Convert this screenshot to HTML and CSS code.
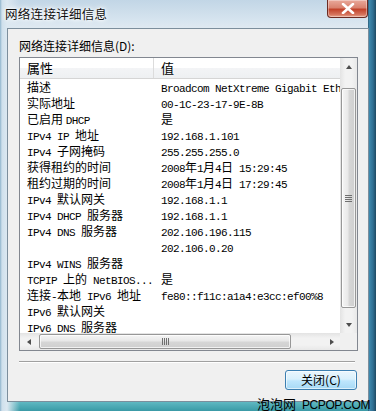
FILE: index.html
```html
<!DOCTYPE html>
<html lang="zh-CN">
<head>
<meta charset="utf-8">
<title>网络连接详细信息</title>
<link rel="stylesheet" href="styles.css">
</head>
<body>
<div class="frame">
  <div class="titlebar">
    <div class="title">网络连接详细信息</div>
    <div class="close">
      <svg width="14" height="11" viewBox="0 0 14 11"><path d="M2 1 L12 10 M12 1 L2 10" stroke="#ffffff" stroke-width="2.6" stroke-linecap="round"/></svg>
    </div>
  </div>
  <div class="panel">
    <div class="label">网络连接详细信息(D):</div>
    <div class="listbox">
      <div class="main">
        <div class="head">
          <div class="h1">属性</div>
          <div class="h2">值</div>
        </div>
        <div class="row"><div class="c1">描述</div><div class="c2"><span class="m">Broadcom NetXtreme Gigabit Ethernet</span></div></div>
        <div class="row"><div class="c1">实际地址</div><div class="c2"><span class="m">00-1C-23-17-9E-8B</span></div></div>
        <div class="row"><div class="c1">已启用 <span class="m">DHCP</span></div><div class="c2">是</div></div>
        <div class="row"><div class="c1"><span class="m">IPv4 IP </span>地址</div><div class="c2"><span class="m">192.168.1.101</span></div></div>
        <div class="row"><div class="c1"><span class="m">IPv4 </span>子网掩码</div><div class="c2"><span class="m">255.255.255.0</span></div></div>
        <div class="row"><div class="c1">获得租约的时间</div><div class="c2"><span class="m">2008</span>年<span class="m">1</span>月<span class="m">4</span>日<span class="m"> 15:29:45</span></div></div>
        <div class="row"><div class="c1">租约过期的时间</div><div class="c2"><span class="m">2008</span>年<span class="m">1</span>月<span class="m">4</span>日<span class="m"> 17:29:45</span></div></div>
        <div class="row"><div class="c1"><span class="m">IPv4 </span>默认网关</div><div class="c2"><span class="m">192.168.1.1</span></div></div>
        <div class="row"><div class="c1"><span class="m">IPv4 DHCP </span>服务器</div><div class="c2"><span class="m">192.168.1.1</span></div></div>
        <div class="row"><div class="c1"><span class="m">IPv4 DNS </span>服务器</div><div class="c2"><span class="m">202.106.196.115</span></div></div>
        <div class="row"><div class="c1"></div><div class="c2"><span class="m">202.106.0.20</span></div></div>
        <div class="row"><div class="c1"><span class="m">IPv4 WINS </span>服务器</div><div class="c2"></div></div>
        <div class="row"><div class="c1"><span class="m">TCPIP </span>上的<span class="m"> NetBIOS...</span></div><div class="c2">是</div></div>
        <div class="row"><div class="c1">连接<span class="m">-</span>本地<span class="m"> IPv6 </span>地址</div><div class="c2"><span class="m">fe80::f11c:a1a4:e3cc:ef00%8</span></div></div>
        <div class="row"><div class="c1"><span class="m">IPv6 </span>默认网关</div><div class="c2"></div></div>
        <div class="row"><div class="c1"><span class="m">IPv6 DNS </span>服务器</div><div class="c2"></div></div>
      </div>
      <div class="vscroll">
        <div class="arrow"><span class="tri up"></span></div>
        <div class="vthumb">
          <svg width="7" height="7" viewBox="0 0 7 7"><path d="M0 0.5H7M0 2.5H7M0 4.5H7M0 6.5H7" stroke="#6f6f6f" stroke-width="1"/></svg>
        </div>
        <div class="vfill"></div>
        <div class="arrow"><span class="tri down"></span></div>
      </div>
      <div class="hscroll">
        <div class="harrow"><span class="tri left"></span></div>
        <div class="hthumb">
          <svg width="7" height="7" viewBox="0 0 7 7"><path d="M0.5 0V7M2.5 0V7M4.5 0V7M6.5 0V7" stroke="#6f6f6f" stroke-width="1"/></svg>
        </div>
        <div class="hfill"></div>
        <div class="harrow"><span class="tri right"></span></div>
      </div>
      <div class="corner"></div>
    </div>
    <div class="sep"></div>
    <div class="buttons">
      <div class="btn">关闭(C)</div>
    </div>
  </div>
  <div class="watermark">泡泡网 <span class="wm">PCPOP.COM</span></div>
</div>
</body>
</html>
```
FILE: styles.css
```css
html, body {
  margin: 0;
  padding: 0;
}
body {
  width: 376px;
  height: 411px;
  overflow: hidden;
  font-family: "Noto Sans CJK SC", "Liberation Sans", sans-serif;
  font-size: 12px;
  color: #000;
}
.frame {
  position: relative;
  width: 376px;
  height: 411px;
  box-sizing: border-box;
  display: flex;
  flex-direction: column;
  background:
    linear-gradient(90deg, rgba(0,0,0,0) 368px, #24485e 368px, #3f8bb0 369px, #2f6f92 373px, #1e4a63 376px),
    linear-gradient(90deg, #8fb4cc 0px, #cfe0ec 2px, #dce8f1 7px, rgba(220,232,241,0) 20px),
    linear-gradient(180deg, #c2d6e6 0px, #d6e4ef 20px, #dfe9f1 28px, #d8e6ee 300px, #bfdde4 380px, #5fb8c2 402px, #3a9aa6 411px);
}
.titlebar {
  height: 28px;
  display: flex;
  justify-content: space-between;
  align-items: flex-start;
}
.title {
  padding: 5px 0 0 5px;
  line-height: 18px;
  font-size: 12.5px;
  letter-spacing: 0.3px;
  color: #101010;
  text-shadow: 0 0 4px #ffffff, 0 0 6px #ffffff, 0 0 2px #ffffff;
}
.close {
  width: 41px;
  height: 18px;
  margin-right: 8px;
  box-sizing: border-box;
  border: 1px solid #6b2b22;
  border-top: none;
  border-radius: 0 0 4px 4px;
  background: linear-gradient(180deg, #e9a99b 0%, #d9826f 45%, #c2432b 55%, #d5735c 85%, #e9a58f 100%);
  box-shadow: inset 0 0 0 1px rgba(255,255,255,0.35);
  display: flex;
  align-items: center;
  justify-content: center;
}
.panel {
  margin: 0 7px;
  width: 362px;
  height: 374px;
  box-sizing: border-box;
  border: 1px solid #7c8e9c;
  background: #f0f0f0;
  display: flex;
  flex-direction: column;
}
.label {
  margin: 9px 0 0 11px;
  line-height: 16px;
  height: 16px;
}
.listbox {
  margin: 3px 0 0 11px;
  width: 339px;
  height: 294px;
  box-sizing: border-box;
  border: 1px solid #828790;
  background: #ffffff;
  display: grid;
  grid-template-columns: 320px 17px;
  grid-template-rows: 275px 17px;
}
.main {
  overflow: hidden;
}
.head {
  height: 20px;
  border-bottom: 1px solid #d5d5d5;
  display: flex;
  background: linear-gradient(180deg, #ffffff 0%, #ffffff 50%, #f3f4f6 51%, #eef0f2 100%);
  line-height: 20px;
  font-size: 13px;
}
.h1 {
  width: 126px;
  padding-left: 7px;
  border-right: 1px solid #dcdcdc;
}
.h2 {
  padding-left: 7px;
}
.row {
  display: flex;
  height: 16px;
  line-height: 16px;
  white-space: nowrap;
}
.c1 {
  width: 127px;
  padding-left: 7px;
  flex: none;
  overflow: hidden;
}
.c2 {
  padding-left: 7px;
  flex: none;
}
.m {
  font-family: "Liberation Mono", "DejaVu Sans Mono", monospace;
  font-size: 11px;
  letter-spacing: -0.6px;
  white-space: pre;
}
.vscroll {
  display: flex;
  flex-direction: column;
  background: linear-gradient(90deg, #e3e3e3 0%, #f2f2f2 30%, #f2f2f2 70%, #e8e8e8 100%);
}
.arrow {
  height: 17px;
  display: flex;
  align-items: center;
  justify-content: center;
  flex: none;
}
.vthumb {
  margin: 13px 1px 0 1px;
  height: 220px;
  flex: none;
  box-sizing: border-box;
  border: 1px solid #979797;
  border-radius: 2px;
  background: linear-gradient(90deg, #f5f5f5 0%, #e8e8e8 45%, #d6d6d6 55%, #cfcfcf 100%);
  box-shadow: inset 0 0 0 1px rgba(255,255,255,0.7);
  display: flex;
  align-items: center;
  justify-content: center;
}
.vfill {
  flex: 1;
}
.hscroll {
  display: flex;
  background: linear-gradient(180deg, #e3e3e3 0%, #f2f2f2 30%, #f2f2f2 70%, #e8e8e8 100%);
}
.harrow {
  width: 17px;
  display: flex;
  align-items: center;
  justify-content: center;
  flex: none;
}
.hthumb {
  margin: 1px 0 1px 2px;
  width: 252px;
  flex: none;
  box-sizing: border-box;
  border: 1px solid #979797;
  border-radius: 2px;
  background: linear-gradient(180deg, #f5f5f5 0%, #e8e8e8 45%, #d6d6d6 55%, #cfcfcf 100%);
  box-shadow: inset 0 0 0 1px rgba(255,255,255,0.7);
  display: flex;
  align-items: center;
  justify-content: center;
}
.hfill {
  flex: 1;
}
.corner {
  background: #f0f0f0;
}
.tri {
  width: 0;
  height: 0;
  display: block;
}
.tri.up {
  border-left: 3.5px solid transparent;
  border-right: 3.5px solid transparent;
  border-bottom: 4px solid #4e4e4e;
}
.tri.down {
  border-left: 3.5px solid transparent;
  border-right: 3.5px solid transparent;
  border-top: 4px solid #4e4e4e;
}
.tri.left {
  border-top: 3.5px solid transparent;
  border-bottom: 3.5px solid transparent;
  border-right: 4px solid #4e4e4e;
}
.tri.right {
  border-top: 3.5px solid transparent;
  border-bottom: 3.5px solid transparent;
  border-left: 4px solid #4e4e4e;
}
.sep {
  margin: 10px 13px 0 11px;
  height: 1px;
  background: #a0a0a0;
  border-bottom: 1px solid #ffffff;
}
.buttons {
  margin-top: 7px;
  padding-right: 11px;
  display: flex;
  justify-content: flex-end;
}
.btn {
  width: 72px;
  height: 20px;
  box-sizing: border-box;
  border: 1px solid #3c7fb1;
  border-radius: 3px;
  background: linear-gradient(180deg, #eaf6fd 0%, #d9f0fc 45%, #bee6fd 55%, #a7d9f5 100%);
  box-shadow: inset 0 0 0 1px rgba(255,255,255,0.6);
  line-height: 18px;
  text-align: center;
  font-size: 12px;
}
.watermark {
  position: absolute;
  left: 257px;
  top: 396px;
  font-size: 13px;
  line-height: 16px;
  color: #000;
  white-space: nowrap;
}
.wm {
  font-family: "Liberation Sans", sans-serif;
  font-size: 12px;
  letter-spacing: -0.4px;
  margin-left: 3px;
}
```
